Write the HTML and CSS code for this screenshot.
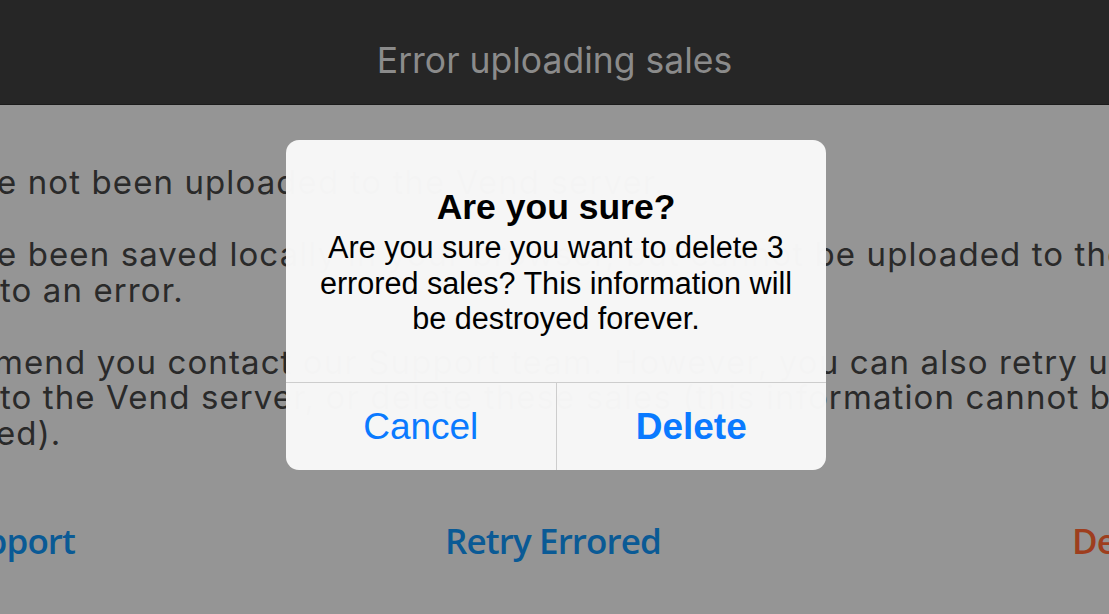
FILE: index.html
```html
<!DOCTYPE html>
<html lang="en">
<head>
<meta charset="utf-8">
<title>Error uploading sales</title>
<link rel="stylesheet" href="styles.css">
</head>
<body>
<div class="screen">
  <header class="topbar">
    <h1 class="topbar-title">Error uploading sales</h1>
  </header>
  <main class="content">
    <div class="copy">
      <p class="para">
        <span class="ln ln-1">e not been uploaded to the Vend server.</span>
      </p>
      <p class="para">
        <span class="ln ln-2">e been saved locally in your browser, but cannot be uploaded to the Vend server</span>
        <span class="ln ln-3">to an error.</span>
      </p>
      <p class="para">
        <span class="ln ln-4">mend you contact our Support team. However, you can also retry uploading</span>
        <span class="ln ln-5">to the Vend server, or delete these sales (this information cannot be</span>
        <span class="ln ln-6">ed).</span>
      </p>
    </div>
    <nav class="actions">
      <a class="action action-support">Contact Support</a>
      <a class="action action-retry">Retry Errored</a>
      <a class="action action-delete">Delete Errored</a>
    </nav>
  </main>

  <div class="alert" role="alertdialog">
    <div class="alert-body">
      <div class="alert-title">Are you sure?</div>
      <div class="alert-message">Are you sure you want to delete 3 errored sales? This information will be destroyed forever.</div>
    </div>
    <div class="alert-buttons">
      <button class="alert-btn">Cancel</button>
      <button class="alert-btn alert-btn-strong">Delete</button>
    </div>
  </div>
</div>
</body>
</html>
```

FILE: styles.css
```css
* { box-sizing: border-box; }

html, body {
  margin: 0;
  padding: 0;
  width: 1109px;
  height: 614px;
  overflow: hidden;
  background: #959595;
}

.screen {
  position: relative;
  width: 1109px;
  height: 614px;
  overflow: hidden;
  display: flex;
  flex-direction: column;
}

.topbar {
  height: 105px;
  flex: none;
  background: #262626;
  border-bottom: 1px solid #1b1b1b;
  display: flex;
  justify-content: center;
  align-items: flex-start;
}

.topbar-title {
  margin: 0;
  padding-top: 41px;
  font-family: "Inter", "DejaVu Sans", sans-serif;
  font-weight: 400;
  font-size: 35.5px;
  line-height: 40px;
  color: #8b8b8b;
}

.content {
  flex: 1;
  background: #959595;
  padding-top: 60px;
  font-family: "Inter", "DejaVu Sans", sans-serif;
  color: #2a2a2a;
}

.copy {
  font-size: 33px;
  line-height: 35.5px;
  letter-spacing: 1.1px;
}

.para {
  margin: 0 0 36.5px 0;
}

.ln {
  display: block;
  white-space: nowrap;
}

.ln-1 { margin-left: -3px; }
.ln-2 { margin-left: -3px; }
.ln-3 { margin-left: 0; }
.ln-4 { margin-left: -6px; }
.ln-5 { margin-left: 0; }
.ln-6 { margin-left: -4px; }

.actions {
  display: flex;
  align-items: baseline;
  white-space: nowrap;
  margin-top: 70px;
  margin-left: -225px;
  font-family: "Open Sans", "DejaVu Sans", sans-serif;
  font-weight: 600;
  font-size: 35px;
  line-height: 40px;
  letter-spacing: -0.9px;
}

.action { display: block; flex: none; }
.action-support { color: #0a5a95; width: 300px; text-align: right; }
.action-retry { color: #0a5a95; width: 956px; text-align: center; }
.action-delete { color: #9e3e1e; padding-left: 41px; }

.alert {
  position: absolute;
  left: 286px;
  top: 140px;
  width: 540px;
  height: 330px;
  border-radius: 13px;
  background: rgba(248, 248, 248, 0.985);
  display: flex;
  flex-direction: column;
  overflow: hidden;
  font-family: "Liberation Sans", Arial, sans-serif;
}

.alert-body {
  flex: 1;
  padding: 47px 20px 0;
  text-align: center;
  color: #000;
}

.alert-title {
  font-weight: 700;
  font-size: 35.5px;
  line-height: 40px;
}

.alert-message {
  margin-top: 3px;
  font-size: 30.6px;
  line-height: 35.5px;
}

.alert-buttons {
  height: 88px;
  flex: none;
  display: flex;
  border-top: 1px solid #cdcdcd;
}

.alert-btn {
  flex: 1;
  margin: 0;
  padding: 0;
  border: 0;
  background: transparent;
  font-family: "Liberation Sans", Arial, sans-serif;
  font-size: 37px;
  line-height: 87px;
  color: #0a7aff;
}

.alert-btn + .alert-btn {
  border-left: 1px solid #cdcdcd;
}

.alert-btn-strong { font-weight: 700; }
```
